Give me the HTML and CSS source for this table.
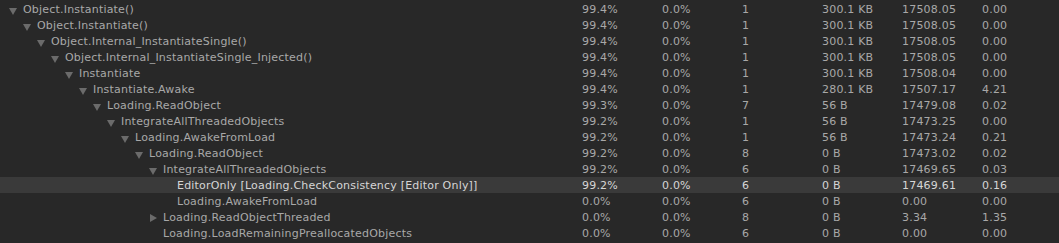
FILE: index.html
```html
<!DOCTYPE html>
<html lang="en">
<head>
    <meta charset="UTF-8">
    <title>Profiler - Hierarchy</title>
    <link rel="stylesheet" href="styles.css">
</head>
<body>

    <div class="hierarchy">

        <!-- Each row: name (indented by depth), Total, Self, Calls, GC Alloc, Time ms, Self ms -->
        <div class="row" style="--lvl:0">
            <div class="name"><span class="toggle open"></span>Object.Instantiate()</div>
            <div>99.4%</div><div>0.0%</div><div>1</div><div>300.1 KB</div><div>17508.05</div><div>0.00</div>
        </div>
        <div class="row" style="--lvl:1">
            <div class="name"><span class="toggle open"></span>Object.Instantiate()</div>
            <div>99.4%</div><div>0.0%</div><div>1</div><div>300.1 KB</div><div>17508.05</div><div>0.00</div>
        </div>
        <div class="row" style="--lvl:2">
            <div class="name"><span class="toggle open"></span>Object.Internal_InstantiateSingle()</div>
            <div>99.4%</div><div>0.0%</div><div>1</div><div>300.1 KB</div><div>17508.05</div><div>0.00</div>
        </div>
        <div class="row" style="--lvl:3">
            <div class="name"><span class="toggle open"></span>Object.Internal_InstantiateSingle_Injected()</div>
            <div>99.4%</div><div>0.0%</div><div>1</div><div>300.1 KB</div><div>17508.05</div><div>0.00</div>
        </div>
        <div class="row" style="--lvl:4">
            <div class="name"><span class="toggle open"></span>Instantiate</div>
            <div>99.4%</div><div>0.0%</div><div>1</div><div>300.1 KB</div><div>17508.04</div><div>0.00</div>
        </div>
        <div class="row" style="--lvl:5">
            <div class="name"><span class="toggle open"></span>Instantiate.Awake</div>
            <div>99.4%</div><div>0.0%</div><div>1</div><div>280.1 KB</div><div>17507.17</div><div>4.21</div>
        </div>
        <div class="row" style="--lvl:6">
            <div class="name"><span class="toggle open"></span>Loading.ReadObject</div>
            <div>99.3%</div><div>0.0%</div><div>7</div><div>56 B</div><div>17479.08</div><div>0.02</div>
        </div>
        <div class="row" style="--lvl:7">
            <div class="name"><span class="toggle open"></span>IntegrateAllThreadedObjects</div>
            <div>99.2%</div><div>0.0%</div><div>1</div><div>56 B</div><div>17473.25</div><div>0.00</div>
        </div>
        <div class="row" style="--lvl:8">
            <div class="name"><span class="toggle open"></span>Loading.AwakeFromLoad</div>
            <div>99.2%</div><div>0.0%</div><div>1</div><div>56 B</div><div>17473.24</div><div>0.21</div>
        </div>
        <div class="row" style="--lvl:9">
            <div class="name"><span class="toggle open"></span>Loading.ReadObject</div>
            <div>99.2%</div><div>0.0%</div><div>8</div><div>0 B</div><div>17473.02</div><div>0.02</div>
        </div>
        <div class="row" style="--lvl:10">
            <div class="name"><span class="toggle open"></span>IntegrateAllThreadedObjects</div>
            <div>99.2%</div><div>0.0%</div><div>6</div><div>0 B</div><div>17469.65</div><div>0.03</div>
        </div>
        <div class="row selected" style="--lvl:11">
            <div class="name"><span class="toggle"></span>EditorOnly [Loading.CheckConsistency [Editor Only]]</div>
            <div>99.2%</div><div>0.0%</div><div>6</div><div>0 B</div><div>17469.61</div><div>0.16</div>
        </div>
        <div class="row" style="--lvl:11">
            <div class="name"><span class="toggle"></span>Loading.AwakeFromLoad</div>
            <div>0.0%</div><div>0.0%</div><div>6</div><div>0 B</div><div>0.00</div><div>0.00</div>
        </div>
        <div class="row" style="--lvl:10">
            <div class="name"><span class="toggle closed"></span>Loading.ReadObjectThreaded</div>
            <div>0.0%</div><div>0.0%</div><div>8</div><div>0 B</div><div>3.34</div><div>1.35</div>
        </div>
        <div class="row" style="--lvl:10">
            <div class="name"><span class="toggle"></span>Loading.LoadRemainingPreallocatedObjects</div>
            <div>0.0%</div><div>0.0%</div><div>6</div><div>0 B</div><div>0.00</div><div>0.00</div>
        </div>

    </div>

</body>
</html>
```

FILE: styles.css
```css
/* Basic Reset & Body Styling */
* {
    box-sizing: border-box;
    margin: 0;
    padding: 0;
}

html, body {
    height: 100%;
    overflow: hidden;
    background-color: #282828; /* Unity dark skin */
    font-family: "DejaVu Sans", sans-serif;
    font-size: 11px;
    letter-spacing: 0.2px;
    color: #a8a8a8;
}

/* Tree table */
.hierarchy {
    padding-top: 1px;
}

.row {
    display: grid;
    grid-template-columns: 582px repeat(6, 80px);
    height: 16px;
    line-height: 17px;
    white-space: nowrap;
}

.row.selected {
    background-color: #3a3a3a;
    color: #d6d6d6;
}

/* Name column, indented by depth */
.name {
    display: flex;
    align-items: center;
    padding-left: calc(9px + var(--lvl) * 14px);
}

/* Foldout arrows */
.toggle {
    width: 14px;
    height: 16px;
    flex-shrink: 0;
    position: relative;
}

.toggle.open::before {
    content: "";
    position: absolute;
    left: 0;
    top: 6px;
    border-left: 4px solid transparent;
    border-right: 4px solid transparent;
    border-top: 7px solid #6b6b6b;
}

.toggle.closed::before {
    content: "";
    position: absolute;
    left: 1px;
    top: 4px;
    border-top: 4px solid transparent;
    border-bottom: 4px solid transparent;
    border-left: 7px solid #6b6b6b;
}
```
